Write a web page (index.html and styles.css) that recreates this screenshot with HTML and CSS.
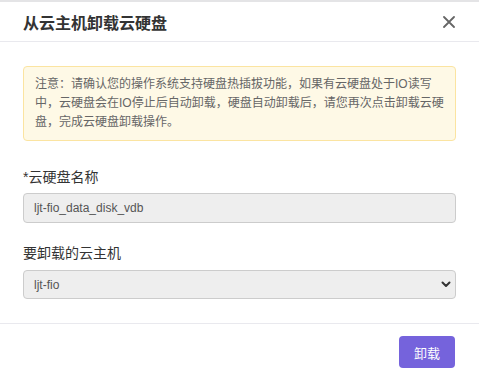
FILE: index.html
```html
<!DOCTYPE html>
<html lang="zh-CN">
<head>
  <meta charset="UTF-8">
  <title>从云主机卸载云硬盘</title>
  <link rel="stylesheet" href="styles.css">
</head>
<body>

  <div class="modal">
    <div class="modal-header">
      <h2>从云主机卸载云硬盘</h2>
      <button class="close" type="button" aria-label="关闭">
        <svg width="12" height="12" viewBox="0 0 12 12">
          <path d="M1 1 L11 11 M11 1 L1 11" stroke="#666" stroke-width="1.8" stroke-linecap="round"/>
        </svg>
      </button>
    </div>

    <form class="modal-body" id="detachForm">
      <div class="alert">
        注意：请确认您的操作系统支持硬盘热插拔功能，如果有云硬盘处于IO读写中，云硬盘会在IO停止后自动卸载，硬盘自动卸载后，请您再次点击卸载云硬盘，完成云硬盘卸载操作。
      </div>

      <label for="diskName">*云硬盘名称</label>
      <input type="text" id="diskName" value="ljt-fio_data_disk_vdb" readonly>

      <label for="server">要卸载的云主机</label>
      <div class="select-wrap">
        <select id="server">
          <option>ljt-fio</option>
        </select>
        <svg class="chevron" width="10" height="7" viewBox="0 0 10 7">
          <path d="M1.5 1.5 L5 5 L8.5 1.5" stroke="#333" stroke-width="2" fill="none" stroke-linecap="round" stroke-linejoin="round"/>
        </svg>
      </div>
    </form>

    <div class="modal-footer">
      <button type="submit" form="detachForm" class="primary">卸载</button>
    </div>
  </div>

</body>
</html>
```

FILE: styles.css
```css
body {
  margin: 0;
  font-family: "Liberation Sans", "Noto Sans CJK SC", sans-serif;
  background: #fff;
  color: #333;
}

.modal {
  border-top: 2px solid #e4e4e6;
  background: white;
}

.modal-header {
  height: 39px;
  padding: 0 23px;
  display: flex;
  align-items: center;
  justify-content: space-between;
  border-bottom: 1px solid #e9e9ee;
}

.modal-header h2 {
  margin: 0;
  font-size: 16px;
  font-weight: bold;
  color: #333;
  font-family: "Noto Sans CJK SC", sans-serif;
}

.close {
  background: none;
  border: none;
  padding: 0;
  margin-right: 1px;
  width: 12px;
  height: 12px;
  display: flex;
  cursor: pointer;
}

.modal-body {
  padding: 24px 23px 24px 23px;
  display: flex;
  flex-direction: column;
}

.alert {
  background: #fef9e6;
  border: 1px solid #fbe4a1;
  border-radius: 4px;
  padding: 8px 11px;
  font-size: 12px;
  line-height: 19px;
  color: #666;
  margin-bottom: 26px;
}

label {
  font-size: 14px;
  line-height: 20px;
  color: #333;
  margin-bottom: 6px;
}

input[type="text"],
select {
  box-sizing: border-box;
  width: 100%;
  height: 30px;
  padding: 0 10px;
  background: #eee;
  border: 1px solid #ccc;
  border-radius: 4px;
  font-family: "Liberation Sans", sans-serif;
  font-size: 12px;
  color: #555;
  outline: none;
}

input[type="text"] {
  margin-bottom: 20px;
}

.select-wrap {
  position: relative;
  margin-top: 1px;
}

select {
  appearance: none;
  -webkit-appearance: none;
  height: 29px;
}

.chevron {
  position: absolute;
  right: 5px;
  top: 11px;
  pointer-events: none;
}

.modal-footer {
  border-top: 1px solid #e9e9ee;
  padding: 12px 24px;
  display: flex;
  justify-content: flex-end;
}

button.primary {
  background-color: #7563dc;
  color: white;
  border: none;
  border-radius: 4px;
  width: 56px;
  height: 32px;
  font-family: "Noto Sans CJK SC", sans-serif;
  font-size: 13px;
  cursor: pointer;
}

button.primary:hover {
  background-color: #6150c8;
}
```
